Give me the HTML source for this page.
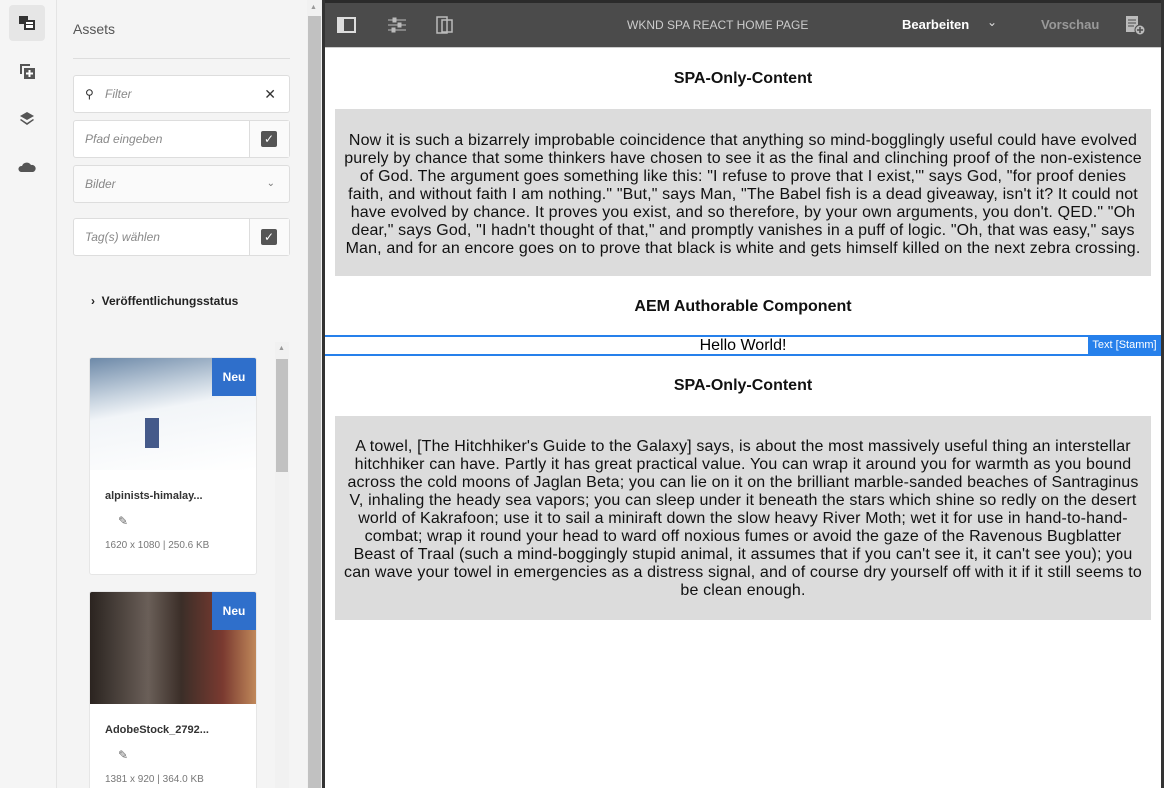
<!DOCTYPE html>
<html><head><meta charset="utf-8"><style>
*{margin:0;padding:0;box-sizing:border-box}
html{overflow:hidden;width:1164px;height:788px}
body{width:1164px;height:788px;overflow:hidden;background:#fff;font-family:"Liberation Sans",sans-serif;position:relative}
.rail{position:absolute;left:0;top:0;width:57px;height:788px;background:#f5f5f5;border-right:1px solid #e4e4e4}
.rail .ic{position:absolute;left:9px;width:36px;height:36px;display:flex;align-items:center;justify-content:center}
.panel{position:absolute;left:57px;top:0;width:250px;height:788px;background:#f4f4f4}
.sb{position:absolute;left:307px;top:0;width:15px;height:788px;background:#f1f1f1}
.sb .th{position:absolute;left:1px;top:16px;width:13px;height:772px;background:#c1c1c1}
.dk{position:absolute;left:322px;top:0;width:3px;height:788px;background:#333}
.inp{position:absolute;left:73px;width:217px;height:38px;background:#fff;border:1px solid #ddd;border-radius:3px;font-size:12px;font-style:italic;color:#888;padding-left:11px;line-height:36px}
.chk{position:absolute;right:0;top:0;width:40px;height:36px;border-left:1px solid #ddd;background:#fafafa}
.chk i{position:absolute;left:11px;top:10px;width:16px;height:16px;background:#555;border-radius:2px;color:#fff;font-style:normal;font-size:12px;line-height:16px;text-align:center}
.card{position:absolute;left:89px;width:168px;background:#fff;border:1px solid #e6e6e6;border-radius:3px;overflow:hidden}
.card .img{height:112px;position:relative}
.neu{position:absolute;right:0;top:0;width:44px;height:38px;background:#2f6fcb;color:#fff;font-size:12px;font-weight:bold;text-align:center;line-height:38px}
.card .t{font-size:11px;font-weight:bold;color:#333;margin:20px 0 0 15px}
.card .p{font-size:12px;color:#666;margin:12px 0 0 28px}
.card .m{font-size:10px;color:#777;margin:12px 0 0 15px}
.tb{position:absolute;left:325px;top:0;width:839px;height:48px;background:#4b4b4b;border-top:3px solid #2b2b2b;border-bottom:1px solid #ccc}
.tb span{position:absolute;top:15px;font-size:12px}
.main{position:absolute;left:325px;top:48px;width:836px;height:740px;overflow:hidden}
h2{font-size:16px;font-weight:bold;text-align:center;color:#111}
.box{margin:0 10px;background:#dcdcdc;font-size:16px;line-height:18px;text-align:center;color:#111;letter-spacing:0.15px}
.rb{position:absolute;left:1161px;top:0;width:3px;height:788px;background:#333}
</style></head><body>
<div class="rail">
 <div class="ic" style="top:5px;background:#e6e6e6;border-radius:4px"><svg width="20" height="18"><rect x="2" y="2" width="9" height="8" fill="#333"/><rect x="7" y="6" width="11" height="10" fill="#333"/><rect x="9" y="8" width="7" height="6" fill="#fff"/><rect x="8" y="10" width="9" height="1" fill="#333"/></svg></div>
 <div class="ic" style="top:53px"><svg width="18" height="18"><path d="M2 2h10v2H4v8H2z" fill="#555"/><rect x="6" y="6" width="11" height="11" fill="#555"/><path d="M11.5 8v7M8 11.5h7" stroke="#fff" stroke-width="2"/></svg></div>
 <div class="ic" style="top:101px"><svg width="18" height="18"><path d="M9 2l7 4-7 4-7-4z" fill="#555"/><path d="M3 9l6 4 6-4 1 1-7 5-7-5z" fill="#555"/></svg></div>
 <div class="ic" style="top:149px"><svg width="18" height="14"><path d="M3 12a3 3 0 0 1 1-6 5 5 0 0 1 9-1 3.5 3.5 0 0 1 2 7z" fill="#555"/></svg></div>
</div>
<div class="panel">
 <div style="position:absolute;left:16px;top:21px;font-size:14px;color:#555">Assets</div>
 <div style="position:absolute;left:16px;top:58px;width:217px;height:1px;background:#ddd"></div>
</div>
<div class="inp" style="top:75px;padding-left:31px">Filter<span style="position:absolute;left:11px;top:0;font-style:normal;color:#333">⚲</span><span style="position:absolute;right:13px;top:0;font-style:normal;color:#333;font-size:14px">✕</span></div>
<div class="inp" style="top:120px">Pfad eingeben<div class="chk"><i>✓</i></div></div>
<div class="inp" style="top:165px;background:#fafafa">Bilder<span style="position:absolute;right:14px;top:0;font-style:normal;color:#777;font-size:10px">⌄</span></div>
<div class="inp" style="top:218px">Tag(s) wählen<div class="chk"><i>✓</i></div></div>
<div style="position:absolute;left:91px;top:294px;font-size:12px;font-weight:bold;color:#222">›&nbsp; Veröffentlichungsstatus</div>
<div class="card" style="top:357px;height:218px"><div class="img" style="background:linear-gradient(170deg,#6d89a8 0%,#c7d3df 30%,#f2f5f8 45%,#fff 100%)"><div style="position:absolute;left:55px;top:60px;width:14px;height:30px;background:#455a8a"></div><div class="neu">Neu</div></div><div class="t">alpinists-himalay...</div><div class="p">✎</div><div class="m">1620 x 1080 | 250.6 KB</div></div>
<div class="card" style="top:591px;height:210px"><div class="img" style="background:linear-gradient(90deg,#2b2420 0%,#6a5f58 35%,#3b2e28 55%,#7a3a30 80%,#c0885a 100%)"><div class="neu">Neu</div></div><div class="t">AdobeStock_2792...</div><div class="p">✎</div><div class="m">1381 x 920 | 364.0 KB</div></div>
<div class="sb"><div style="position:absolute;left:3px;top:4px;font-size:7px;color:#999">▲</div><div class="th"></div></div>
<div style="position:absolute;left:275px;top:342px;width:14px;height:446px;background:#f1f1f1"><div style="position:absolute;left:3px;top:3px;font-size:7px;color:#999">▲</div><div style="position:absolute;left:1px;top:17px;width:12px;height:113px;background:#c1c1c1"></div></div>
<div class="dk"></div>
<div class="tb">
 <svg style="position:absolute;left:12px;top:14px" width="20" height="16"><rect x="1" y="1" width="17" height="14" fill="none" stroke="#ddd" stroke-width="2"/><rect x="2" y="2" width="5" height="12" fill="#ddd"/></svg>
 <svg style="position:absolute;left:62px;top:13px" width="20" height="18" stroke="#bbb"><path d="M1 4h18M1 9h18M1 14h18"/><rect x="6" y="2" width="3" height="4" fill="#bbb"/><rect x="11" y="7" width="3" height="4" fill="#bbb"/><rect x="5" y="12" width="3" height="4" fill="#bbb"/></svg>
 <svg style="position:absolute;left:111px;top:13px" width="18" height="20" fill="none" stroke="#bbb" stroke-width="1.5"><rect x="1" y="1" width="10" height="16"/><rect x="6" y="4" width="10" height="12"/></svg>
 <span style="left:302px;color:#ccc">WKND SPA REACT HOME PAGE</span>
 <span style="left:577px;color:#fff;font-weight:bold;font-size:13px;top:14px">Bearbeiten</span>
 <span style="left:662px;color:#ddd;top:12px">⌄</span>
 <span style="left:716px;color:#999;font-weight:bold;font-size:13px;top:14px">Vorschau</span>
 <svg style="position:absolute;left:800px;top:12px" width="20" height="20"><rect x="1" y="1" width="12" height="16" fill="#bbb"/><path d="M3 5h8M3 8h8M3 11h6" stroke="#4b4b4b"/><circle cx="15" cy="15" r="5" fill="#bbb" stroke="#4b4b4b"/><path d="M15 12v6M12 15h6" stroke="#4b4b4b" stroke-width="1.5"/></svg>
</div>
<div class="main">
 <h2 style="margin-top:22px;height:39px">SPA-Only-Content</h2>
 <div class="box" style="height:167px;padding:23px 8px 0">Now it is such a bizarrely improbable coincidence that anything so mind-bogglingly useful could have evolved purely by chance that some thinkers have chosen to see it as the final and clinching proof of the non-existence of God. The argument goes something like this: "I refuse to prove that I exist,'" says God, "for proof denies faith, and without faith I am nothing." "But," says Man, "The Babel fish is a dead giveaway, isn't it? It could not have evolved by chance. It proves you exist, and so therefore, by your own arguments, you don't. QED." "Oh dear," says God, "I hadn't thought of that," and promptly vanishes in a puff of logic. "Oh, that was easy," says Man, and for an encore goes on to prove that black is white and gets himself killed on the next zebra crossing.</div>
 <h2 style="margin-top:22px">AEM Authorable Component</h2>
 <div style="position:absolute;left:0;top:287px;width:836px;height:21px;border-top:2px solid #2680eb;border-bottom:2px solid #2680eb;text-align:center;font-size:16px;line-height:17px">Hello World!<div style="position:absolute;right:0;top:-2px;height:21px;width:73px;background:#2680eb;color:#fff;font-size:11px;line-height:21px">Text [Stamm]</div></div>
 <h2 style="position:absolute;left:0;width:836px;top:329px">SPA-Only-Content</h2>
 <div class="box" style="position:absolute;left:0;width:816px;top:368px;height:204px;padding:22px 8px 0">A towel, [The Hitchhiker's Guide to the Galaxy] says, is about the most massively useful thing an interstellar hitchhiker can have. Partly it has great practical value. You can wrap it around you for warmth as you bound across the cold moons of Jaglan Beta; you can lie on it on the brilliant marble-sanded beaches of Santraginus V, inhaling the heady sea vapors; you can sleep under it beneath the stars which shine so redly on the desert world of Kakrafoon; use it to sail a miniraft down the slow heavy River Moth; wet it for use in hand-to-hand-combat; wrap it round your head to ward off noxious fumes or avoid the gaze of the Ravenous Bugblatter Beast of Traal (such a mind-boggingly stupid animal, it assumes that if you can't see it, it can't see you); you can wave your towel in emergencies as a distress signal, and of course dry yourself off with it if it still seems to be clean enough.</div>
</div>
<div class="rb"></div>
</body></html>
